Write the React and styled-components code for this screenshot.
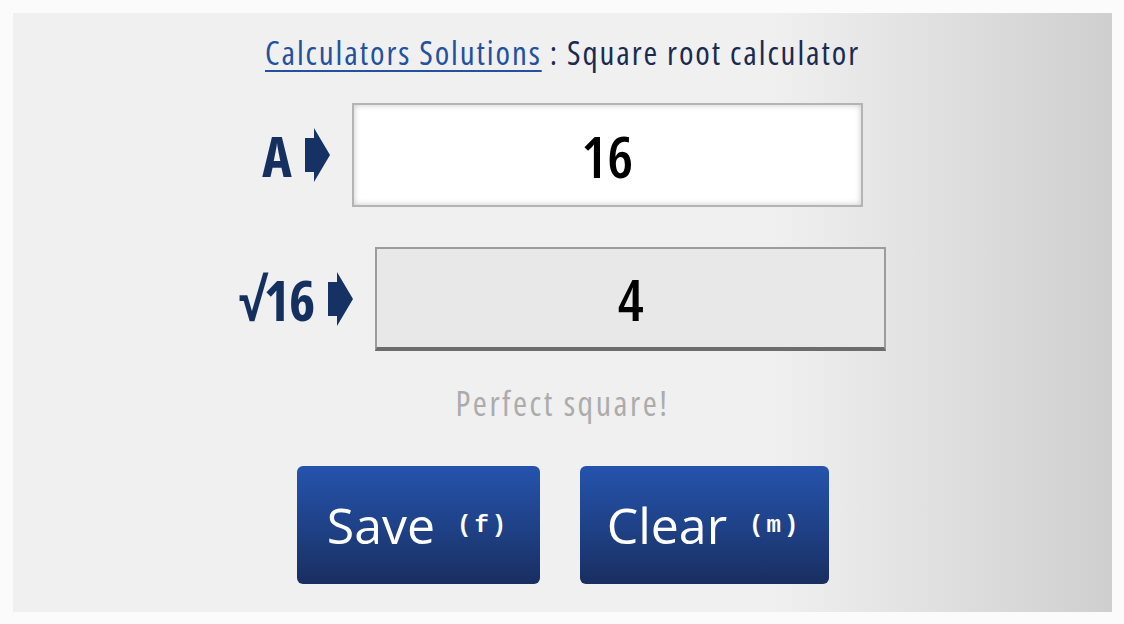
import React from "react";
import styled, { createGlobalStyle } from "styled-components";

const GlobalStyle = createGlobalStyle`
  html, body { margin: 0; padding: 0; background: #fbfbfb; }
  body { font-family: "Open Sans", sans-serif; }
`;

const FONT = `"Open Sans", "Noto Sans", sans-serif`;

const Page = styled.div`
  padding: 13px 12px 10px 13px;
  width: 1124px;
  box-sizing: border-box;
`;

const Panel = styled.div`
  width: 1099px;
  height: 599px;
  background: linear-gradient(to right, #f0f0f0 0%, #f0f0f0 69%, #cfcfcf 100%);
  display: flex;
  flex-direction: column;
  align-items: center;
  padding-top: 20px;
  box-sizing: border-box;
`;

const Title = styled.h1`
  margin: 0;
  font-family: ${FONT};
  font-stretch: 75%;
  font-weight: normal;
  font-size: 33px;
  letter-spacing: 1.9px;
  line-height: 40px;
  color: #1b2a50;
`;

const TitleLink = styled.a`
  color: #2450a0;
  text-decoration: underline;
  text-underline-offset: 5px;
  text-decoration-thickness: 2px;
`;

const Row = styled.div`
  display: flex;
  align-items: center;
  justify-content: center;
  margin-top: ${(p) => p.$mt}px;
`;

const Label = styled.div`
  font-family: ${FONT};
  font-stretch: 75%;
  font-weight: bold;
  font-size: 56px;
  color: #15305f;
  line-height: 1;
  margin-right: 14px;
  letter-spacing: -1px;
`;

const Arrow = styled.svg`
  width: 25px;
  height: 54px;
  margin-right: 22px;
  flex: none;
`;

const Box = styled.div`
  width: 511px;
  height: 104px;
  box-sizing: border-box;
  display: flex;
  align-items: center;
  justify-content: center;
  font-family: ${FONT};
  font-stretch: 75%;
  font-weight: 600;
  font-size: 58px;
  color: #000;
  background: ${(p) => (p.$result ? "#e8e8e8" : "#ffffff")};
  border: 2px solid ${(p) => (p.$result ? "#9c9c9c" : "#b4b4b4")};
  border-bottom: ${(p) => (p.$result ? "4px solid #6c6c6c" : "2px solid #b4b4b4")};
  box-shadow: ${(p) => (p.$result ? "none" : "inset 0 0 6px rgba(0,0,0,0.22)")};
`;

const Message = styled.div`
  margin-top: 32px;
  font-family: ${FONT};
  font-stretch: 75%;
  font-size: 34px;
  letter-spacing: 2.5px;
  line-height: 40px;
  color: #acacac;
`;

const Buttons = styled.div`
  display: flex;
  gap: 40px;
  margin-top: 43px;
`;

const Button = styled.button`
  width: ${(p) => p.$w}px;
  height: 118px;
  border: none;
  border-radius: 6px;
  background: linear-gradient(to bottom, #2553ad 0%, #1f4288 50%, #192e61 100%);
  color: #fff;
  font-family: ${FONT};
  font-size: 50px;
  display: flex;
  align-items: center;
  justify-content: center;
  gap: 22px;
  cursor: pointer;
  padding: 0;
`;

const Key = styled.span`
  font-family: "Liberation Mono", "DejaVu Sans Mono", monospace;
  font-weight: bold;
  font-size: 24px;
  letter-spacing: 3px;
`;

const ArrowIcon = () => (
  <Arrow viewBox="0 0 25 54">
    <polygon points="0,10 9,10 9,0 25,27 9,54 9,44 0,44" fill="#163265" />
  </Arrow>
);

export default function App() {
  return (
    <>
      <GlobalStyle />
      <Page>
        <Panel>
          <Title>
            <TitleLink href="#">Calculators Solutions</TitleLink> : Square root calculator
          </Title>
          <Row $mt={30}>
            <Label>A</Label>
            <ArrowIcon />
            <Box>16</Box>
          </Row>
          <Row $mt={40}>
            <Label>√16</Label>
            <ArrowIcon />
            <Box $result>4</Box>
          </Row>
          <Message>Perfect square!</Message>
          <Buttons>
            <Button $w={243}>
              Save <Key>(f)</Key>
            </Button>
            <Button $w={249}>
              Clear <Key>(m)</Key>
            </Button>
          </Buttons>
        </Panel>
      </Page>
    </>
  );
}
